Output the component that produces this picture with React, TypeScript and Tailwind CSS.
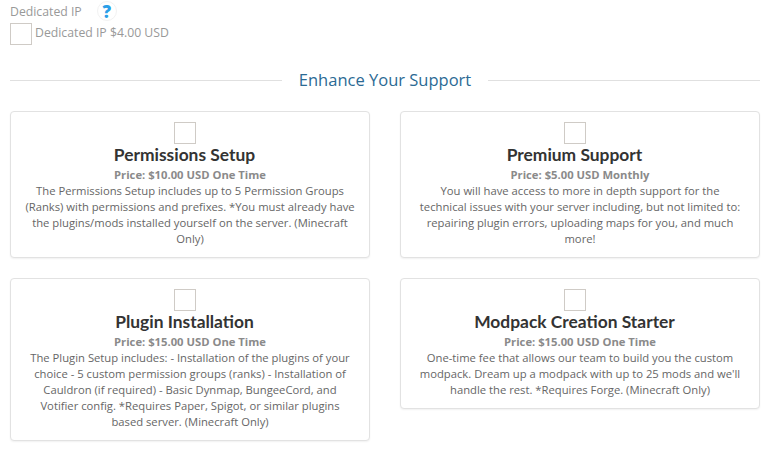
const addons = [
  [
    {
      title: "Permissions Setup",
      price: "Price: $10.00 USD One Time",
      text: "The Permissions Setup includes up to 5 Permission Groups (Ranks) with permissions and prefixes. *You must already have the plugins/mods installed yourself on the server. (Minecraft Only)",
    },
    {
      title: "Plugin Installation",
      price: "Price: $15.00 USD One Time",
      text: "The Plugin Setup includes: - Installation of the plugins of your choice - 5 custom permission groups (ranks) - Installation of Cauldron (if required) - Basic Dynmap, BungeeCord, and Votifier config. *Requires Paper, Spigot, or similar plugins based server. (Minecraft Only)",
    },
  ],
  [
    {
      title: "Premium Support",
      price: "Price: $5.00 USD Monthly",
      text: "You will have access to more in depth support for the technical\u00a0issues with your server including, but not limited to: repairing plugin errors, uploading maps for you, and much more!",
    },
    {
      title: "Modpack Creation Starter",
      price: "Price: $15.00 USD One Time",
      text: "One-time fee that allows our team to build you the custom modpack. Dream up a modpack with up to 25 mods and we'll handle the rest. *Requires Forge. (Minecraft Only)",
    },
  ],
]

function AddonCard({ title, price, text }: { title: string; price: string; text: string }) {
  return (
    <div className="rounded-[4px] border border-[#e2e2e2] bg-white px-[14px] pt-[10px] pb-[10px] text-center shadow-[0_1px_2px_rgba(0,0,0,0.06)]">
      <div className="pr-[11px]">
        <div className="mx-auto h-[22px] w-[22px] border border-[#cfcbc6] bg-white" />
        <h3 className="mb-[1px] font-['Lato',sans-serif] text-[17.4px] leading-[22px] font-bold text-[#333333]">{title}</h3>
      </div>
      <p className="text-[11.25px] leading-[16px] font-bold text-[#8a8a8a]">{price}</p>
      <p className="text-[11.25px] leading-[16px] text-[#666666]">{text}</p>
    </div>
  )
}

export default function App() {
  return (
    <div className="h-[452px] w-[770px] overflow-hidden bg-white px-[10px] pt-[3px] font-['Open_Sans',sans-serif]">
      <div className="flex h-[18px] items-center text-[12.25px] text-[#999999]">
        <span>Dedicated IP</span>
        <span className="ml-[15px] -mt-[2px] flex h-[20px] w-[20px] items-center justify-center rounded-full border border-[#f2f2f2] pt-[2px] text-[17px] font-extrabold text-[#2b9fe8]">?</span>
      </div>
      <div className="mt-[2px] flex h-[22px] items-start">
        <div className="h-[22px] w-[22px] border border-[#cfcbc6] bg-white" />
        <span className="ml-[3px] text-[12.25px] leading-[20px] text-[#999999]">Dedicated IP $4.00 USD</span>
      </div>

      <div className="mt-[23px] flex items-center gap-[17px]">
        <div className="h-px flex-1 bg-[#e0e0e0]" />
        <h2 className="text-[16.5px] leading-[24px] text-[#2b6a94]">Enhance Your Support</h2>
        <div className="h-px flex-1 bg-[#e0e0e0]" />
      </div>

      <div className="mt-[19px] grid grid-cols-2 gap-[30px]">
        {addons.map((column, i) => (
          <div key={i} className="flex flex-col items-stretch gap-[20px]">
            {column.map((addon) => (
              <AddonCard key={addon.title} {...addon} />
            ))}
          </div>
        ))}
      </div>
    </div>
  )
}
